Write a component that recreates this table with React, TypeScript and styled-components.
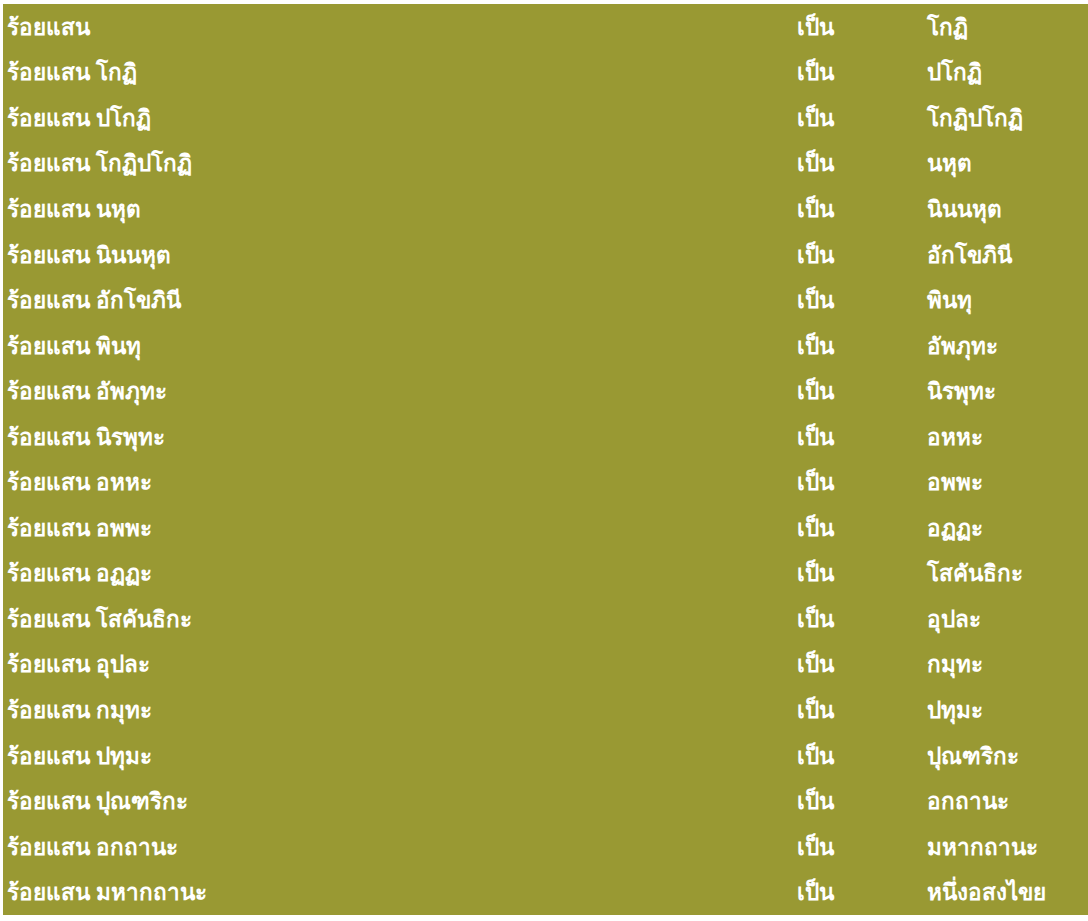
import styled, { createGlobalStyle } from 'styled-components'

const rows: [string, string][] = [
  ['ร้อยแสน', 'โกฏิ'],
  ['ร้อยแสน โกฏิ', 'ปโกฏิ'],
  ['ร้อยแสน ปโกฏิ', 'โกฏิปโกฏิ'],
  ['ร้อยแสน โกฏิปโกฏิ', 'นหุต'],
  ['ร้อยแสน นหุต', 'นินนหุต'],
  ['ร้อยแสน นินนหุต', 'อักโขภินี'],
  ['ร้อยแสน อักโขภินี', 'พินทุ'],
  ['ร้อยแสน พินทุ', 'อัพภุทะ'],
  ['ร้อยแสน อัพภุทะ', 'นิรพุทะ'],
  ['ร้อยแสน นิรพุทะ', 'อหหะ'],
  ['ร้อยแสน อหหะ', 'อพพะ'],
  ['ร้อยแสน อพพะ', 'อฏฏะ'],
  ['ร้อยแสน อฏฏะ', 'โสคันธิกะ'],
  ['ร้อยแสน โสคันธิกะ', 'อุปละ'],
  ['ร้อยแสน อุปละ', 'กมุทะ'],
  ['ร้อยแสน กมุทะ', 'ปทุมะ'],
  ['ร้อยแสน ปทุมะ', 'ปุณฑริกะ'],
  ['ร้อยแสน ปุณฑริกะ', 'อกถานะ'],
  ['ร้อยแสน อกถานะ', 'มหากถานะ'],
  ['ร้อยแสน มหากถานะ', 'หนึ่งอสงไขย'],
]

const GlobalStyle = createGlobalStyle`
  body {
    margin: 0;
    background: #ffffff;
    font-family: "Noto Sans", sans-serif;
  }
`

const Table = styled.div`
  margin: 4px 0 0 3px;
  width: 1085px;
  background-color: #999933;
  display: flex;
  flex-direction: column;
`

const Row = styled.div`
  display: grid;
  grid-template-columns: 790px 130px 1fr;
  height: 45.55px;
  align-items: center;
`

const Cell = styled.div`
  padding-left: 4px;
  color: #ffffff;
  font-weight: bold;
  font-size: 22.5px;
  white-space: nowrap;
`

export default function App() {
  return (
    <>
      <GlobalStyle />
      <Table>
        {rows.map(([left, right], i) => (
          <Row key={i}>
            <Cell>{left}</Cell>
            <Cell>เป็น</Cell>
            <Cell>{right}</Cell>
          </Row>
        ))}
      </Table>
    </>
  )
}
